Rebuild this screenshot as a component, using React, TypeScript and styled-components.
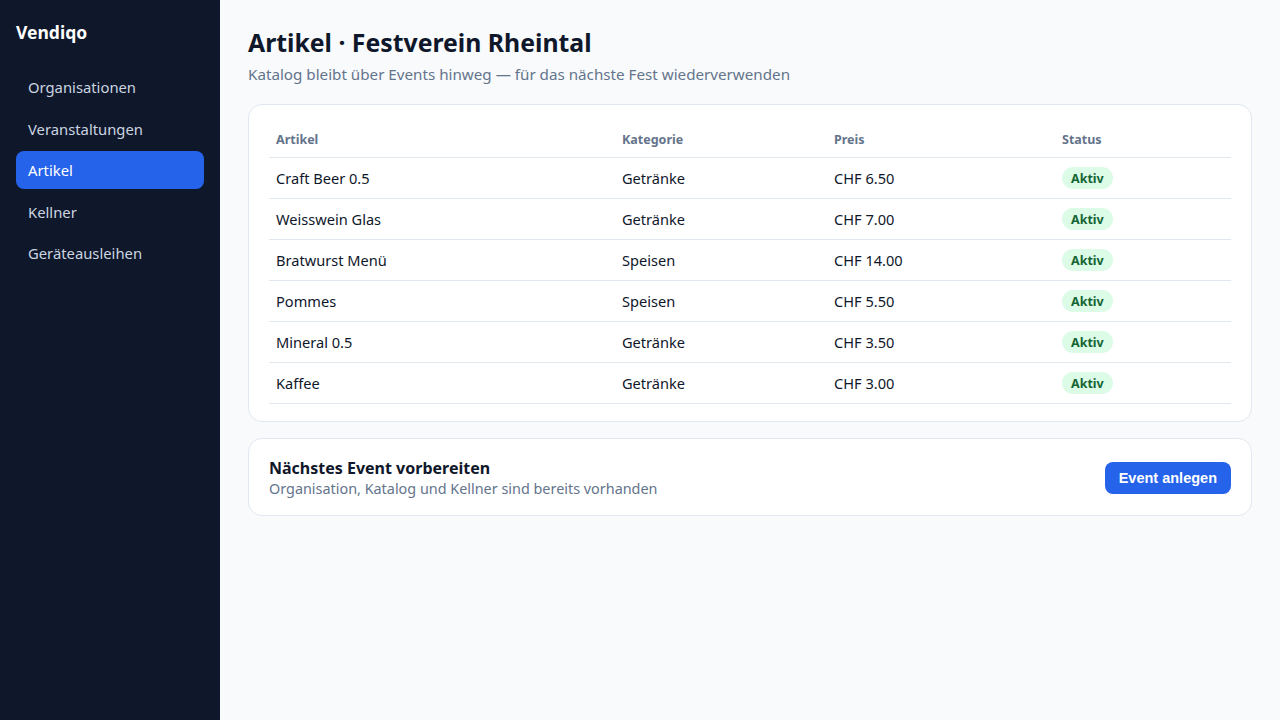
import React from "react";
import styled, { createGlobalStyle } from "styled-components";

const Global = createGlobalStyle`
  html, body { margin: 0; padding: 0; }
  body {
    font-family: "Noto Sans", "DejaVu Sans", sans-serif;
    background: #f8fafc;
    color: #0f172a;
  }
  * { box-sizing: border-box; }
`;

const Shell = styled.div`
  display: grid;
  grid-template-columns: 220px 1fr;
  min-height: 720px;
`;

const Sidebar = styled.aside`
  background: #0f172a;
  padding: 19px 16px;
  display: flex;
  flex-direction: column;
`;

const Brand = styled.div`
  color: #ffffff;
  font-weight: 700;
  font-size: 17.5px;
  line-height: 26px;
  margin-bottom: 23px;
`;

const Nav = styled.nav`
  display: flex;
  flex-direction: column;
  gap: 3.5px;
`;

const NavItem = styled.a<{ $active?: boolean }>`
  display: flex;
  align-items: center;
  height: 38px;
  padding: 0 12px;
  border-radius: 8px;
  font-size: 14.8px;
  color: ${(p) => (p.$active ? "#ffffff" : "#cbd5e1")};
  background: ${(p) => (p.$active ? "#2563eb" : "transparent")};
  cursor: pointer;
`;

const Main = styled.main`
  padding: 24px 28px;
  display: flex;
  flex-direction: column;
`;

const Title = styled.h1`
  margin: 0;
  font-size: 24.8px;
  line-height: 36px;
  font-weight: 700;
  color: #0f172a;
`;

const Subtitle = styled.p`
  margin: 3px 0 0;
  font-size: 15.2px;
  line-height: 22px;
  color: #64748b;
`;

const Card = styled.section`
  background: #ffffff;
  border: 1px solid #e2e8f0;
  border-radius: 14px;
  padding: 20px;
`;

const TableCard = styled(Card)`
  margin-top: 19px;
  padding-bottom: 17px;
`;

const Table = styled.table`
  width: 100%;
  border-collapse: collapse;
  table-layout: fixed;
`;

const Th = styled.th<{ $w: number }>`
  width: ${(p) => p.$w}px;
  text-align: left;
  font-size: 12.5px;
  font-weight: 700;
  color: #64748b;
  height: 32px;
  padding: 0 7px 2px;
  border-bottom: 1px solid #e2e8f0;
`;

const Td = styled.td`
  font-size: 14.6px;
  color: #0f172a;
  height: 41px;
  padding: 0 7px;
  border-bottom: 1px solid #e2e8f0;
`;

const Badge = styled.span`
  display: inline-flex;
  align-items: center;
  vertical-align: middle;
  height: 22px;
  padding: 0 9px;
  border-radius: 999px;
  background: #dcfce7;
  color: #166534;
  font-size: 12.5px;
  font-weight: 700;
`;

const ActionCard = styled(Card)`
  margin-top: 16px;
  display: flex;
  align-items: center;
  justify-content: space-between;
  padding: 18px 20px 16px;
`;

const ActionTitle = styled.div`
  font-size: 16px;
  font-weight: 700;
  line-height: 22px;
  color: #0f172a;
`;

const ActionText = styled.div`
  font-size: 14.4px;
  line-height: 20px;
  color: #64748b;
`;

const Button = styled.button`
  height: 32px;
  padding: 0 14px;
  border: none;
  border-radius: 8px;
  background: #2563eb;
  color: #ffffff;
  font-family: "Liberation Sans", Arial, sans-serif;
  font-weight: 700;
  font-size: 14.5px;
  cursor: pointer;
`;

const items = [
  ["Craft Beer 0.5", "Getränke", "CHF 6.50"],
  ["Weisswein Glas", "Getränke", "CHF 7.00"],
  ["Bratwurst Menü", "Speisen", "CHF 14.00"],
  ["Pommes", "Speisen", "CHF 5.50"],
  ["Mineral 0.5", "Getränke", "CHF 3.50"],
  ["Kaffee", "Getränke", "CHF 3.00"],
];

const nav = ["Organisationen", "Veranstaltungen", "Artikel", "Kellner", "Geräteausleihen"];

export default function App() {
  return (
    <>
      <Global />
      <Shell>
        <Sidebar>
          <Brand>Vendiqo</Brand>
          <Nav>
            {nav.map((n) => (
              <NavItem key={n} $active={n === "Artikel"}>
                {n}
              </NavItem>
            ))}
          </Nav>
        </Sidebar>
        <Main>
          <Title>Artikel · Festverein Rheintal</Title>
          <Subtitle>Katalog bleibt über Events hinweg — für das nächste Fest wiederverwenden</Subtitle>
          <TableCard>
            <Table>
              <thead>
                <tr>
                  <Th $w={346}>Artikel</Th>
                  <Th $w={212}>Kategorie</Th>
                  <Th $w={228}>Preis</Th>
                  <Th $w={176}>Status</Th>
                </tr>
              </thead>
              <tbody>
                {items.map(([name, cat, price]) => (
                  <tr key={name}>
                    <Td>{name}</Td>
                    <Td>{cat}</Td>
                    <Td>{price}</Td>
                    <Td>
                      <Badge>Aktiv</Badge>
                    </Td>
                  </tr>
                ))}
              </tbody>
            </Table>
          </TableCard>
          <ActionCard>
            <div>
              <ActionTitle>Nächstes Event vorbereiten</ActionTitle>
              <ActionText>Organisation, Katalog und Kellner sind bereits vorhanden</ActionText>
            </div>
            <Button>Event anlegen</Button>
          </ActionCard>
        </Main>
      </Shell>
    </>
  );
}
